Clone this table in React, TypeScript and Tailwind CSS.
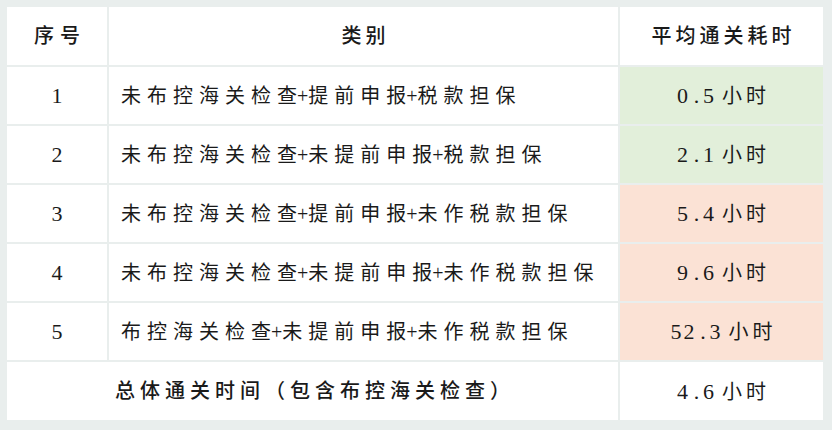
import React from "react";

const rows = [
  { n: "1", t: "未布控海关检查+提前申报+税款担保", v: "0.5", c: "bg-[#e2efda]" },
  { n: "2", t: "未布控海关检查+未提前申报+税款担保", v: "2.1", c: "bg-[#e2efda]" },
  { n: "3", t: "未布控海关检查+提前申报+未作税款担保", v: "5.4", c: "bg-[#fbe2d5]" },
  { n: "4", t: "未布控海关检查+未提前申报+未作税款担保", v: "9.6", c: "bg-[#fbe2d5]" },
  { n: "5", t: "布控海关检查+未提前申报+未作税款担保", v: "52.3", c: "bg-[#fbe2d5]" },
];

const gapClass: Record<string, string> = {
  "4": "mr-[4px]",
  "5": "mr-[5px]",
  "6": "mr-[6px]",
};

function Txt({ s, gap = "6" }: { s: string; gap?: string }) {
  const chars = s.split("");
  return (
    <span className="inline-flex items-baseline whitespace-nowrap">
      {chars.map((ch, i) => {
        const next = chars[i + 1];
        const spaced = next !== undefined && next !== "+" && ch !== "+";
        return (
          <span key={i} className={spaced ? gapClass[gap] : ""}>
            {ch}
          </span>
        );
      })}
    </span>
  );
}

function Val({ v }: { v: string }) {
  return (
    <span className="inline-flex items-baseline">
      {v.split("").map((ch, i) => (
        <span
          key={i}
          className={
            ch === "."
              ? "inline-block w-[13px] text-center text-[22px]"
              : "inline-block w-[13px] text-left text-[22px]"
          }
        >
          {ch}
        </span>
      ))}
      <span className="ml-[6px]">
        <Txt s="小时" gap="4" />
      </span>
    </span>
  );
}

export default function App() {
  return (
    <div className="w-[832px] h-[430px] bg-[#e9eeed] pl-[7px] pt-[7px] pr-[9px] pb-[10px] font-['Liberation_Serif','Noto_Sans_CJK_SC',serif] text-[20px] text-[#1a1a1a]">
      <div className="grid grid-cols-[100px_509px_203px] grid-rows-[58px_repeat(5,57px)_58px] gap-[2px]">
        <div className="bg-white flex items-center justify-center font-medium">
          <Txt s="序号" gap="6" />
        </div>
        <div className="bg-white flex items-center justify-center font-medium">
          <Txt s="类别" gap="4" />
        </div>
        <div className="bg-white flex items-center justify-center font-medium">
          <Txt s="平均通关耗时" gap="4" />
        </div>
        {rows.map((r) => (
          <React.Fragment key={r.n}>
            <div className="bg-white flex items-center justify-center text-[22px]">{r.n}</div>
            <div className="bg-white flex items-center pl-[12px]">
              <Txt s={r.t} gap="6" />
            </div>
            <div className={`${r.c} flex items-center justify-center`}>
              <Val v={r.v} />
            </div>
          </React.Fragment>
        ))}
        <div className="col-span-2 bg-white flex items-center justify-center font-medium">
          <Txt s="总体通关时间（包含布控海关检查）" gap="5" />
        </div>
        <div className="bg-white flex items-center justify-center">
          <Val v="4.6" />
        </div>
      </div>
    </div>
  );
}
